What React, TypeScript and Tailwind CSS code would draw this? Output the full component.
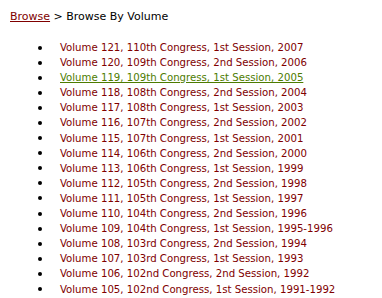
const volumes = [
  'Volume 121, 110th Congress, 1st Session, 2007',
  'Volume 120, 109th Congress, 2nd Session, 2006',
  'Volume 119, 109th Congress, 1st Session, 2005',
  'Volume 118, 108th Congress, 2nd Session, 2004',
  'Volume 117, 108th Congress, 1st Session, 2003',
  'Volume 116, 107th Congress, 2nd Session, 2002',
  'Volume 115, 107th Congress, 1st Session, 2001',
  'Volume 114, 106th Congress, 2nd Session, 2000',
  'Volume 113, 106th Congress, 1st Session, 1999',
  'Volume 112, 105th Congress, 2nd Session, 1998',
  'Volume 111, 105th Congress, 1st Session, 1997',
  'Volume 110, 104th Congress, 2nd Session, 1996',
  'Volume 109, 104th Congress, 1st Session, 1995-1996',
  'Volume 108, 103rd Congress, 2nd Session, 1994',
  'Volume 107, 103rd Congress, 1st Session, 1993',
  'Volume 106, 102nd Congress, 2nd Session, 1992',
  'Volume 105, 102nd Congress, 1st Session, 1991-1992',
]

export default function App() {
  return (
    <div className="h-[298px] w-[382px] overflow-hidden bg-white pl-[10px] pt-[9px] font-['DejaVu_Sans',Verdana,sans-serif] text-[11px] text-black">
      {/* Breadcrumb */}
      <div className="leading-[16px]">
        <a href="#" className="text-[#800000] underline">Browse</a>
        <span> &gt; Browse By Volume</span>
      </div>

      <ul className="mt-[15px] pl-[28px] whitespace-nowrap font-['DejaVu_Sans_Condensed','DejaVu_Sans',sans-serif] text-[11.3px] leading-[15.1px]">
        {volumes.map((v, i) => (
          <li key={v} className="flex items-center">
            <span className="mr-[18px] h-[4px] w-[4px] rounded-full bg-black" />
            <a
              href="#"
              className={i === 2 ? 'text-[#4d7c00] underline' : 'text-[#800000] no-underline'}
            >
              {v}
            </a>
          </li>
        ))}
      </ul>
    </div>
  )
}
